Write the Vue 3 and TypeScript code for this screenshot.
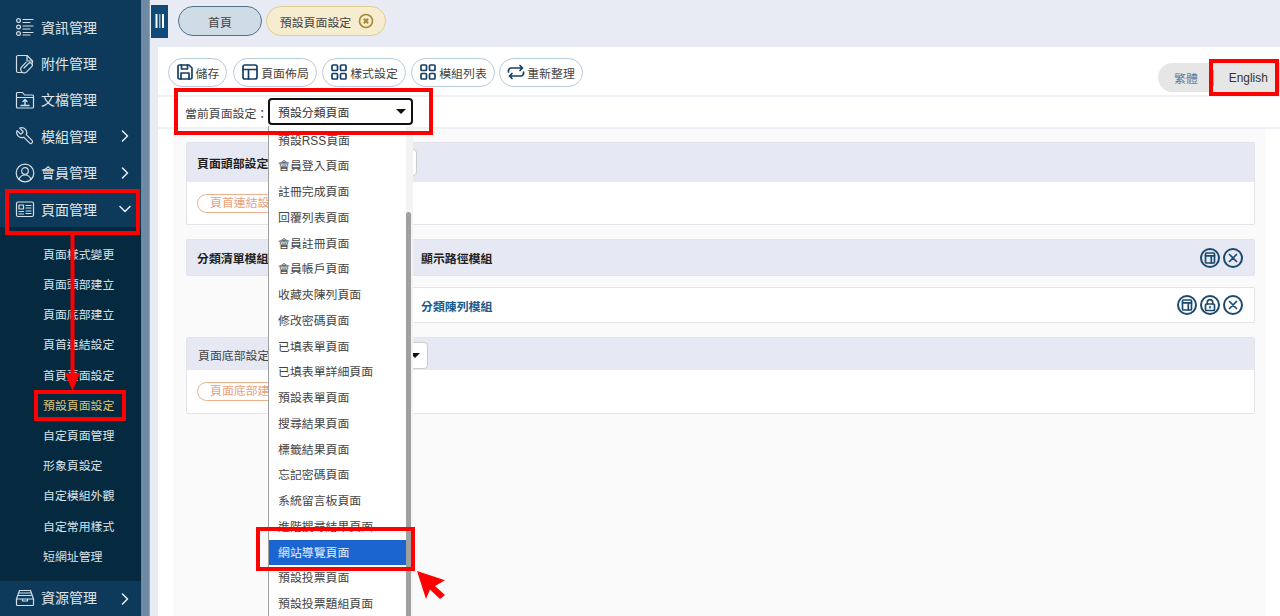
<script setup lang="ts">
interface NavItem { label: string; icon: string; chevron?: 'right' | 'down' }

const navTop: NavItem[] = [
  { label: '資訊管理', icon: 'list' },
  { label: '附件管理', icon: 'attach' },
  { label: '文檔管理', icon: 'folder' },
  { label: '模組管理', icon: 'wrench', chevron: 'right' },
  { label: '會員管理', icon: 'user', chevron: 'right' },
  { label: '頁面管理', icon: 'news', chevron: 'down' },
]
const subNav = ['頁面樣式變更', '頁面頭部建立', '頁面底部建立', '頁首連結設定', '首頁頁面設定', '預設頁面設定', '自定頁面管理', '形象頁設定', '自定模組外觀', '自定常用樣式', '短網址管理']
const tools = [
  { label: '儲存', icon: 'save' },
  { label: '頁面佈局', icon: 'layout' },
  { label: '樣式設定', icon: 'grid' },
  { label: '模組列表', icon: 'grid' },
  { label: '重新整理', icon: 'refresh' },
]
const options = ['預設RSS頁面', '會員登入頁面', '註冊完成頁面', '回覆列表頁面', '會員註冊頁面', '會員帳戶頁面', '收藏夾陳列頁面', '修改密碼頁面', '已填表單頁面', '已填表單詳細頁面', '預設表單頁面', '搜尋結果頁面', '標籤結果頁面', '忘記密碼頁面', '系統留言板頁面', '進階搜尋結果頁面', '網站導覽頁面', '預設投票頁面', '預設投票題組頁面']
</script>

<template>
  <div class="app">
    <aside class="side">
      <nav class="side-nav">
        <div class="nav-top">
          <div v-for="n in navTop" :key="n.label" class="nav-item">
            <svg class="nav-ico" viewBox="0 0 20 20" fill="none" stroke="currentColor" stroke-width="1.2" stroke-linecap="round" stroke-linejoin="round">
              <template v-if="n.icon === 'list'">
                <circle cx="3.5" cy="3.5" r="1.9" /><circle cx="3.5" cy="10" r="1.9" /><circle cx="3.5" cy="16.5" r="1.9" />
                <path d="M8 2.500h10M8 5.500h7M8 9h10M8 12h7M8 15.500h10M8 18h7" />
              </template>
              <template v-else-if="n.icon === 'attach'">
                <path d="M7 18.500H3a1.500 1.500 0 0 1-1.500-1.500V3A1.500 1.500 0 0 1 3 1.500h9l5.500 5.500v2" /><path d="M12 1.500V7h5.500" />
                <path d="M9 14l4.500-4.500a2.200 2.200 0 0 1 3.200 3.100l-5 5.200a3.500 3.500 0 0 1-5-5l4.300-4.400" />
              </template>
              <template v-else-if="n.icon === 'folder'">
                <path d="M1.500 17V3.500a1 1 0 0 1 1-1h5l2 2.500h8a1 1 0 0 1 1 1V17a1 1 0 0 1-1 1h-15a1 1 0 0 1-1-1z" /><path d="M1.500 7.500h17" />
                <path d="M10 14.500v-4.500M8 11.500l2-2 2 2M6 15.500h8" stroke-width="1.400" />
              </template>
              <template v-else-if="n.icon === 'wrench'">
                <path transform="translate(20 0) scale(-.83 .83)" stroke-width="1.450" d="M14.700 6.300a1 1 0 0 0 0 1.400l1.600 1.600a1 1 0 0 0 1.400 0l3.770-3.770a6 6 0 0 1-7.940 7.940l-6.910 6.910a2.120 2.120 0 0 1-3-3l6.910-6.910a6 6 0 0 1 7.940-7.940l-3.760 3.760z" />
              </template>
              <template v-else-if="n.icon === 'user'">
                <circle cx="10" cy="10" r="8.800" /><circle cx="10" cy="8" r="3.300" /><path d="M4 16.500c1-3 3.300-4.500 6-4.500s5 1.500 6 4.500" />
              </template>
              <template v-else>
                <rect x="1.500" y="3" width="17" height="14.500" rx="1.500" />
                <rect x="4" y="6" width="4.500" height="4" /><path d="M4 12.500h4.500M4 15h4.500M11 6.500h5M11 9h5M11 12h5M11 14.500h5" />
              </template>
            </svg>
            <span class="nav-label">{{ n.label }}</span>
            <svg v-if="n.chevron" class="chev" viewBox="0 0 12 12" fill="none" stroke="currentColor" stroke-width="1.500" stroke-linecap="round" stroke-linejoin="round">
              <path :d="n.chevron === 'right' ? 'M3.500 1l5 5-5 5' : 'M1 3.500l5 5 5-5'" />
            </svg>
          </div>
        </div>
        <div class="nav-sub">
          <div v-for="s in subNav" :key="s" class="sub-item" :class="{ on: s === '預設頁面設定' }">{{ s }}</div>
        </div>
        <div class="nav-item nav-last">
          <svg class="nav-ico" viewBox="0 0 20 20" fill="none" stroke="currentColor" stroke-width="1.200" stroke-linecap="round" stroke-linejoin="round">
            <path d="M1.500 11l3-8.500h11l3 8.500v5.500a1 1 0 0 1-1 1h-15a1 1 0 0 1-1-1z" /><path d="M1.500 11h17M4 5h12M3.500 7.500h13M7.500 11v2h5v-2" />
          </svg>
          <span class="nav-label">資源管理</span>
          <svg class="chev" viewBox="0 0 12 12" fill="none" stroke="currentColor" stroke-width="1.500" stroke-linecap="round" stroke-linejoin="round"><path d="M3.500 1l5 5-5 5" /></svg>
        </div>
      </nav>
      <div class="side-track"></div>
    </aside>

    <main class="main">
      <header class="topbar">
        <button class="toggle" type="button">
          <svg viewBox="0 0 12 16" width="12" height="16" fill="#fff"><rect x="1.500" y="1" width="2" height="14" /><rect x="5.200" y="1" width="1.200" height="14" opacity=".7" /><rect x="8" y="1" width="2" height="14" /></svg>
        </button>
        <div class="tab tab-home">首頁</div>
        <div class="tab tab-active">
          <span>預設頁面設定</span>
          <svg viewBox="0 0 16 16" width="16" height="16" fill="none" stroke="#a58a35"><circle cx="8" cy="8" r="6.500" stroke-width="1.600" /><path d="M5.800 5.800l4.400 4.400M10.200 5.800l-4.400 4.400" stroke-width="2" /></svg>
        </div>
      </header>

      <section class="page">
        <div class="toolbar">
          <button v-for="t in tools" :key="t.label" class="tool" type="button">
            <svg viewBox="0 0 18 18" width="18" height="18" fill="none" stroke="#153f63" stroke-width="1.700" stroke-linecap="round" stroke-linejoin="round">
              <template v-if="t.icon === 'save'">
                <path d="M2 3.500A1.500 1.500 0 0 1 3.500 2h9.500L16 5v9.500a1.500 1.500 0 0 1-1.500 1.500h-11A1.500 1.500 0 0 1 2 14.500z" /><path d="M5.500 2v4h6V2M5 16v-6h8v6" />
              </template>
              <template v-else-if="t.icon === 'layout'">
                <rect x="2" y="2" width="14" height="14" rx="2" /><path d="M2 6.500h14M7.500 6.500V16" />
              </template>
              <template v-else-if="t.icon === 'grid'">
                <rect x="2" y="2" width="5.500" height="5.500" rx="1" /><rect x="10.500" y="2" width="5.500" height="5.500" rx="1" /><rect x="2" y="10.500" width="5.500" height="5.500" rx="1" /><rect x="10.500" y="10.500" width="5.500" height="5.500" rx="1" />
              </template>
              <template v-else>
                <path d="M1.500 9V7.500a2.500 2.500 0 0 1 2.500-2.500h11.500M13 2.500L15.500 5 13 7.500M16.500 9v1.500A2.500 2.500 0 0 1 14 13H2.500M5 10.500L2.500 13 5 15.500" />
              </template>
            </svg>
            <span>{{ t.label }}</span>
          </button>
          <div class="lang">
            <span class="lang-zh">繁體</span>
            <i class="lang-div"></i>
            <span class="lang-en">English</span>
          </div>
        </div>

        <div class="current">
          <label class="current-label">當前頁面設定：</label>
          <div class="select-main"><span>預設分類頁面</span><i class="caret"></i></div>
        </div>

        <div class="body">
          <div class="panel">
            <div class="panel-head head-1">
              <strong>頁面頭部設定</strong>
              <div class="mini-select ms-1"></div>
            </div>
            <div class="panel-body body-1"><span class="pill">頁首連結設定</span></div>
          </div>

          <div class="panel-head head-2">
            <strong class="cat">分類清單模組</strong>
            <strong class="path">顯示路徑模組</strong>
            <div class="acts">
              <span class="act"><svg viewBox="0 0 20 20"><rect x="5.500" y="5" width="9" height="10" rx="1" /><path d="M5.500 7.800h9M11.300 7.800V15" /></svg></span>
              <span class="act"><svg viewBox="0 0 20 20"><path d="M6.500 6.500l7 7M13.500 6.500l-7 7" /></svg></span>
            </div>
          </div>
          <div class="row">
            <strong class="row-title">分類陳列模組</strong>
            <div class="acts">
              <span class="act"><svg viewBox="0 0 20 20"><rect x="5.500" y="5" width="9" height="10" rx="1" /><path d="M5.500 7.800h9M11.300 7.800V15" /></svg></span>
              <span class="act"><svg viewBox="0 0 20 20"><rect x="5.500" y="9" width="9" height="6.500" rx="1" /><path d="M7.300 9V7.300a2.700 2.700 0 0 1 5.400 0V9M10 11.500v1.200" /></svg></span>
              <span class="act"><svg viewBox="0 0 20 20"><path d="M6.500 6.500l7 7M13.500 6.500l-7 7" /></svg></span>
            </div>
          </div>

          <div class="panel">
            <div class="panel-head head-3">
              <span>頁面底部設定</span>
              <div class="mini-select ms-3"><i class="caret"></i></div>
            </div>
            <div class="panel-body body-3"><span class="pill">頁面底部建立</span></div>
          </div>
        </div>
      </section>
    </main>

    <!-- open select list -->
    <div class="dropdown">
      <ul class="options">
        <li v-for="o in options" :key="o" :class="{ active: o === '網站導覽頁面' }">{{ o }}</li>
      </ul>
      <div class="dd-track"><div class="dd-thumb"></div></div>
    </div>

    <!-- tutorial annotations -->
    <div class="mark m-nav"></div>
    <div class="mark m-sub"></div>
    <div class="mark m-current"></div>
    <div class="mark m-lang"></div>
    <div class="mark m-option"></div>
    <svg class="arrow-down" viewBox="0 0 20 156" fill="#f00"><rect x="7.500" y="0" width="4" height="140" /><path d="M2 138h15l-7.500 18z" /></svg>
    <svg class="arrow-click" viewBox="0 0 28 30" fill="#f00"><path d="M0 0L28 9.300 18 15 28 24 23 28 13 18.500 9 28z" /></svg>
  </div>
</template>

<style>
html, body { margin: 0; padding: 0; }
</style>

<style scoped>
.app {
  position: relative;
  display: flex;
  width: 1280px;
  height: 616px;
  overflow: hidden;
  background: #e8eaf4;
  font-family: "Liberation Sans", "Noto Sans CJK TC", sans-serif;
  font-size: 11.900px;
  color: #333;
}
button { font: inherit; }

.side { display: flex; flex: none; width: 150px; height: 616px; }
.side-nav { width: 141px; background: #0d3a5b; color: #dbe3ea; display: flex; flex-direction: column; }
.side-track { width: 8px; background: #6e8ba3; border-right: 1px solid #8ea4b8; box-sizing: content-box; }
.nav-top { padding-top: 9px; }
.nav-item { display: flex; align-items: center; height: 36.400px; padding-left: 15px; box-sizing: border-box; position: relative; }
.nav-ico { width: 20px; height: 20px; flex: none; color: #d4dee6; }
.nav-label { margin: 0 0 1px 6px; font-size: 14px; color: #dfe6ec; }
.chev { position: absolute; left: 119px; top: 50%; width: 12px; height: 12px; margin-top: -6px; color: #e8eef3; }
.nav-sub { flex: 1; background: #05293f; padding: 12.500px 0 0 43px; min-height: 0; }
.sub-item { height: 30.200px; line-height: 30px; font-size: 11.900px; color: #d9e2e9; }
.sub-item.on { color: #dcc377; }
.nav-last { background: #0d3a5b; height: 35px; flex: none; padding-bottom: 2px; }

.main { flex: 1; min-width: 0; display: flex; flex-direction: column; }
.topbar { display: flex; align-items: center; height: 47px; flex: none; padding-left: 1px; box-sizing: border-box; background: #e8eaf4; }
.toggle { width: 17px; height: 33px; margin: -5px 10px 0 0; padding: 0; border: 0; background: #0f4a78; display: flex; align-items: center; justify-content: center; }
.tab { height: 30px; border-radius: 15px; box-sizing: border-box; margin-top: -5px; display: flex; align-items: center; justify-content: center; color: #444; }
.tab-home { width: 84px; background: #cfdbe5; border: 1px solid #4f7190; margin-right: 4px; }
.tab-active { width: 120px; background: #f6ecd0; border: 1px solid #e3cd90; gap: 7px; padding-left: 2px; }

.page { flex: 1; min-height: 0; margin-left: 8px; background: #fff; display: flex; flex-direction: column; }
.toolbar { display: flex; align-items: flex-start; gap: 5px; height: 50px; flex: none; padding: 10.500px 0 0 10px; box-sizing: border-box; border-bottom: 2px solid #eef0f6; }
.tool { display: flex; align-items: center; gap: 2px; width: 84px; justify-content: center; height: 29px; padding: 0; border: 1px solid #b7cadc; border-radius: 15px; background: #fff; color: #444; box-sizing: border-box; white-space: nowrap; }
.tool:first-child { width: 59px; margin-right: 1px; }
.tool:nth-child(5) { margin-left: -1px; }
.lang { margin-left: auto; margin-top: 5.500px; width: 122px; height: 29px; background: #e6e6e6; border-radius: 15px 0 0 15px; display: flex; align-items: center; position: relative; }
.lang-zh { margin-left: 16px; color: #5f80a0; }
.lang-div { width: 1px; height: 16px; background: #aab; margin-left: 15px; }
.lang-en { margin-left: 15px; color: #333; }

.current { display: flex; align-items: center; flex: none; height: 32px; padding-left: 27px; border-bottom: 2px solid #eef0f6; box-sizing: border-box; }
.current-label { width: 83px; color: #444; white-space: nowrap; }
.select-main { width: 145px; height: 27px; box-sizing: border-box; border: 2px solid #111; border-radius: 4px; background: #fff; display: flex; align-items: center; justify-content: space-between; padding: 0 3px 0 8px; margin-top: -1px; color: #333; }
.caret { width: 0; height: 0; border-left: 5px solid transparent; border-right: 5px solid transparent; border-top: 5px solid #111; margin-right: 2px; }

.body { flex: 1; min-height: 0; margin: 0 14px 0 15px; padding: 13px 11px 0 13px; background: #fafafa; }
.panel { background: #fff; border: 1px solid #e2e4ea; border-radius: 2px; margin-bottom: 14px; }
.panel-head { background: #e6e9f3; display: flex; align-items: center; box-sizing: border-box; color: #222; }
.head-1 { height: 39px; padding-left: 10px; }
.head-1 strong { width: 82px; white-space: nowrap; overflow: hidden; }
.mini-select { height: 27px; box-sizing: border-box; background: #fff; border: 1px solid #ccc; border-radius: 4px; display: flex; align-items: center; justify-content: flex-end; padding-right: 5px; }
.ms-1 { width: 138px; }
.head-3 { height: 32px; padding-left: 11px; color: #444; }
.head-3 span { width: 82px; white-space: nowrap; overflow: hidden; }
.ms-3 { width: 148px; margin-top: 2px; }
.panel-body { box-sizing: border-box; }
.body-1 { height: 42px; padding: 12px 0 0 10px; }
.body-3 { height: 43px; padding: 12px 0 0 10px; }
.pill { display: inline-block; height: 19px; line-height: 17px; padding: 0 12px; border: 1px solid #efb08c; border-radius: 10px; color: #e9a27a; box-sizing: border-box; }

.head-2 { height: 37px; border: 1px solid #e2e4ea; border-radius: 2px; padding-left: 10px; }
.cat { width: 224px; white-space: nowrap; }
.path { flex: 1; }
.acts { display: flex; gap: 3px; margin-right: 11px; }
.act { width: 20px; height: 20px; box-sizing: border-box; border: 2px solid #1c4a6e; border-radius: 50%; display: flex; align-items: center; justify-content: center; }
.act svg { width: 20px; height: 20px; flex: none; fill: none; stroke: #1c4a6e; stroke-width: 1.700; stroke-linecap: round; }
.row { display: flex; align-items: center; margin: 11px 0 14px 224px; height: 36px; background: #fff; border: 1px solid #e2e4ea; border-radius: 2px; box-sizing: border-box; padding-left: 10px; }
.row-title { flex: 1; color: #1c5a8a; }

.dropdown { position: absolute; left: 268px; top: 126px; width: 145px; height: 490px; overflow: hidden; background: #fff; border-left: 1px solid #a0a0a0; box-sizing: border-box; }
.options { margin: 1.600px 7px 0 0; padding: 0; list-style: none; }
.options li { height: 25.750px; line-height: 27.500px; padding-left: 9px; color: #444; white-space: nowrap; }
.options li.active { background: #1a65d0; color: #e6f0ff; }
.dd-track { position: absolute; right: 0; top: 0; bottom: 0; width: 7px; background: #f3f3f3; }
.dd-thumb { position: absolute; left: 0; top: 86px; bottom: 0; width: 5px; background: #a0a0a0; border-radius: 3px 3px 0 0; }

.mark { position: absolute; border: 4px solid #f00; box-sizing: border-box; pointer-events: none; }
.m-nav { left: 5px; top: 189px; width: 135px; height: 46px; }
.m-sub { left: 34px; top: 390px; width: 92px; height: 31px; }
.m-current { left: 174px; top: 88px; width: 259px; height: 47px; }
.m-lang { left: 1209px; top: 59px; width: 70px; height: 37px; }
.m-option { left: 256px; top: 527px; width: 159px; height: 44px; }
.arrow-down { position: absolute; left: 63px; top: 235px; width: 20px; height: 156px; }
.arrow-click { position: absolute; left: 417px; top: 571px; width: 28px; height: 30px; }
</style>
